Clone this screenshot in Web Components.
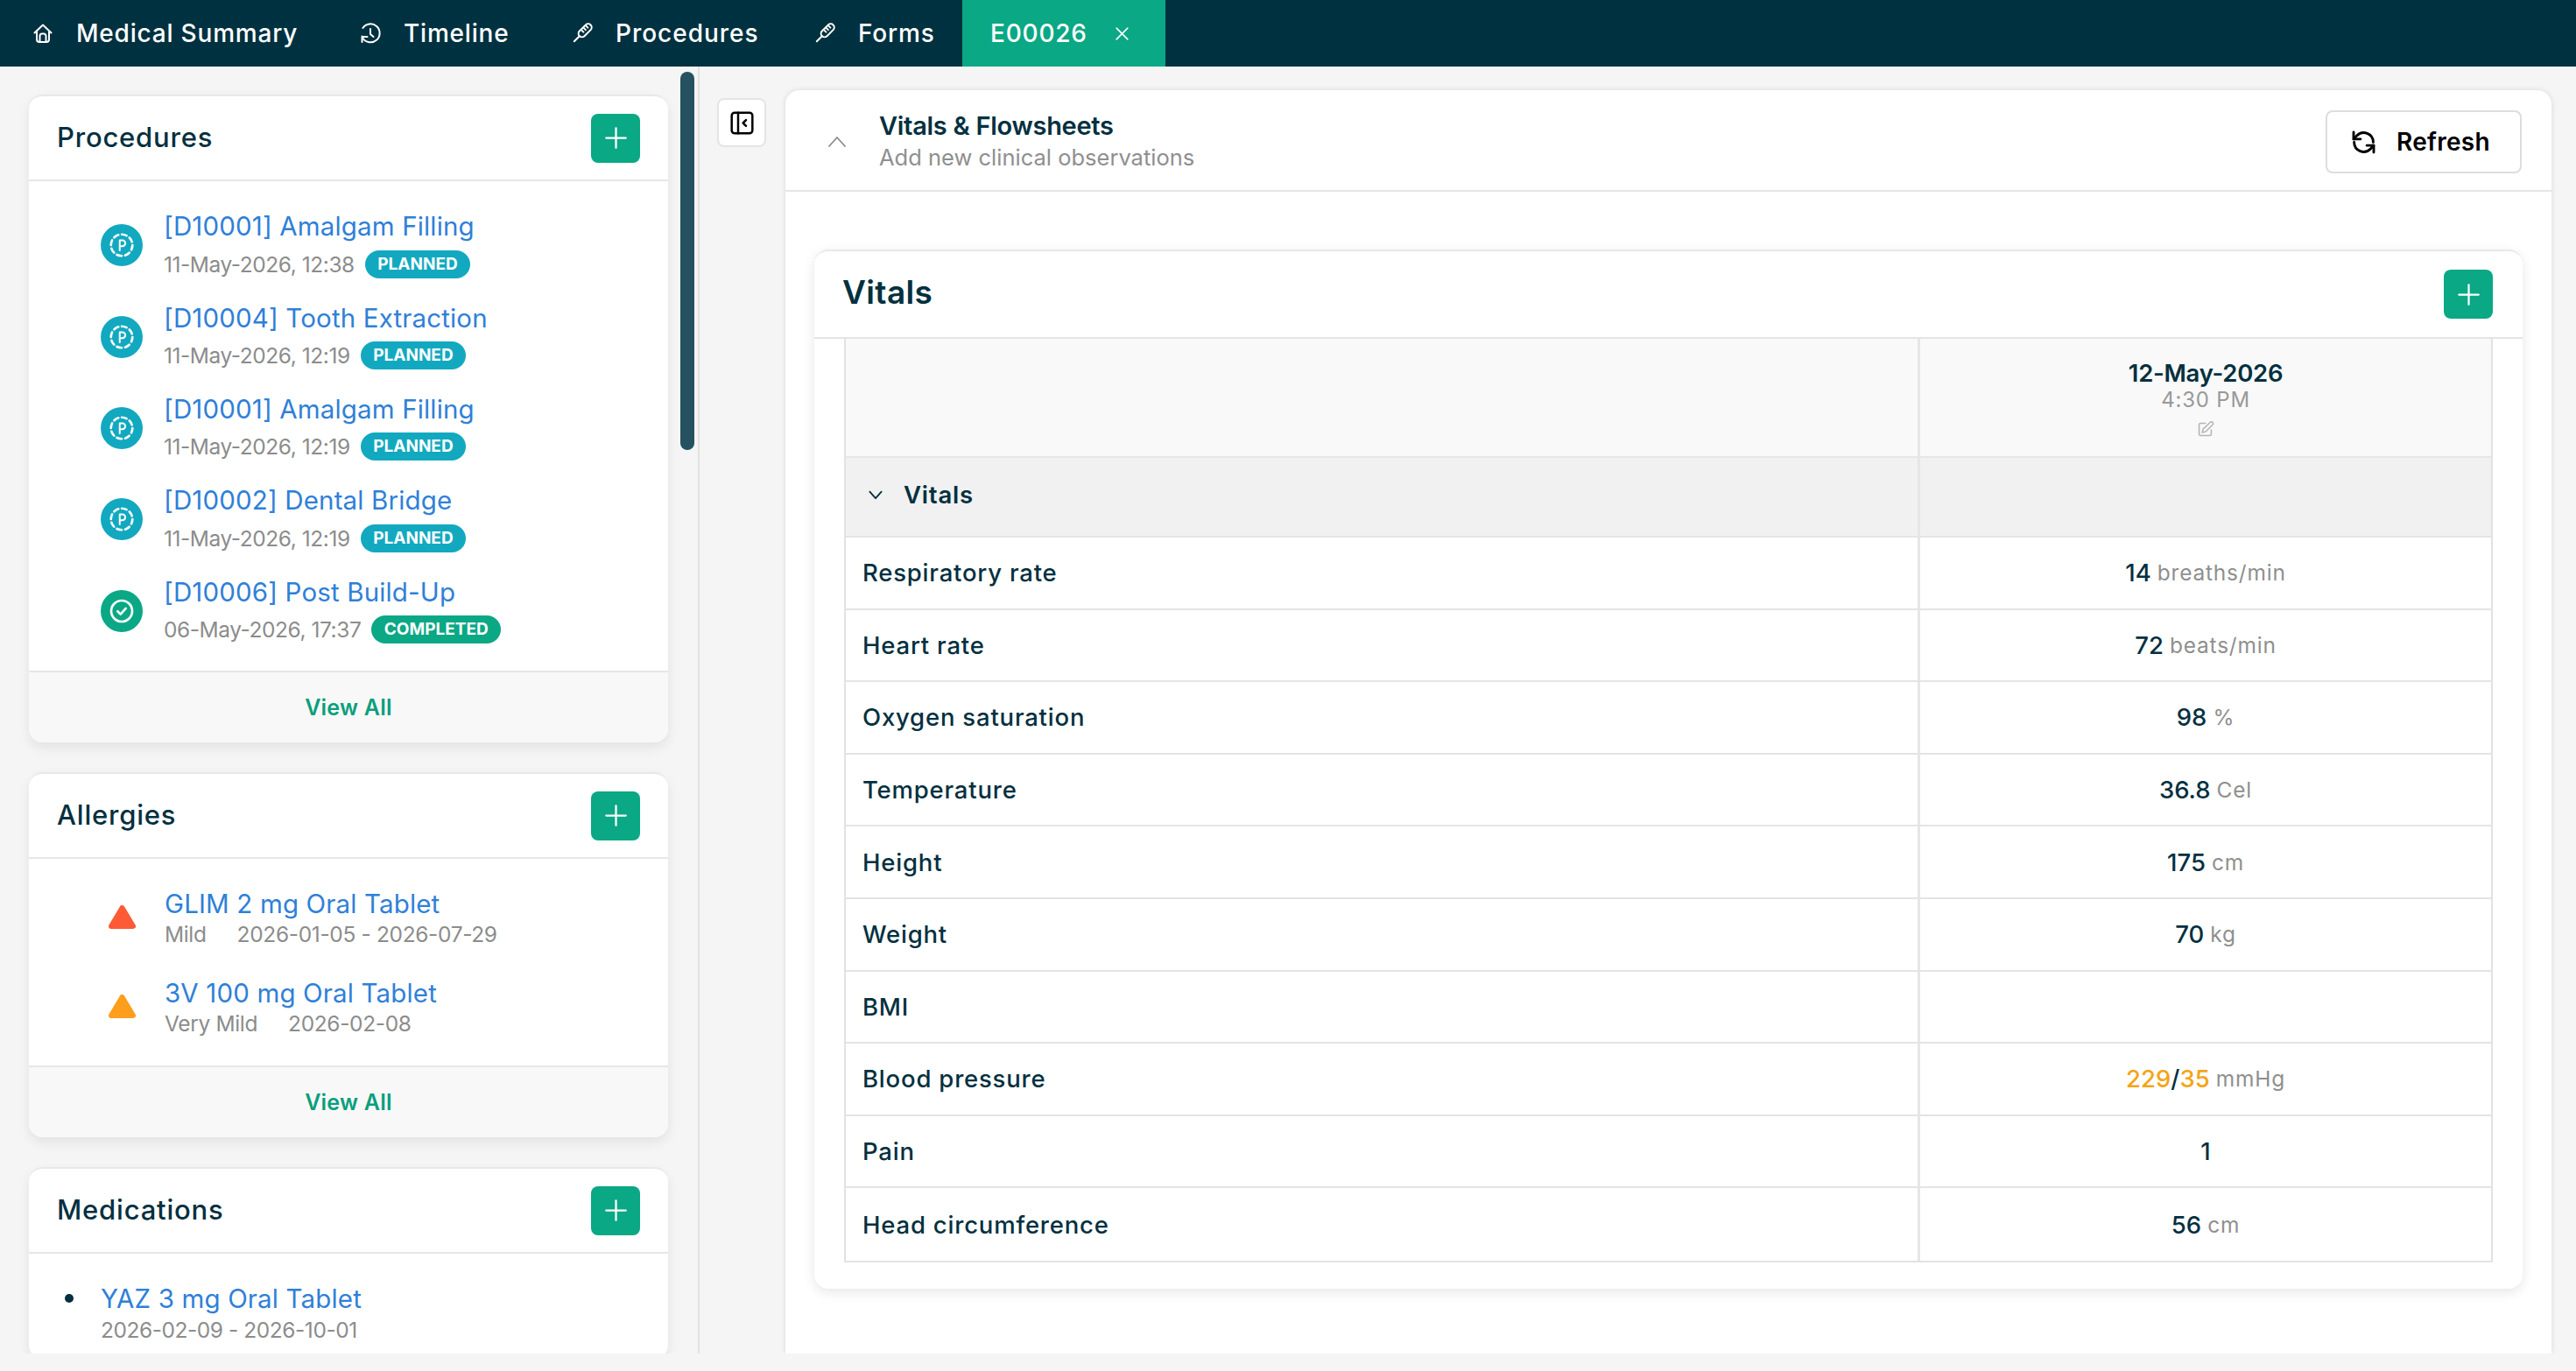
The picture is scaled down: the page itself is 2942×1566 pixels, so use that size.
<!DOCTYPE html>
<html>
<head>
<meta charset="utf-8">
<title>Vitals</title>
<style>
  html, body { margin: 0; height: 100%; background: #f5f5f5; }
  body { font-family: Inter, "Open Sans", sans-serif; color: #04303f; overflow: hidden; letter-spacing: .05em; }
</style>
</head>
<body>
<app-shell>
  <nav-bar slot="nav">
    <nav-tab icon="home" w="374">Medical Summary</nav-tab>
    <nav-tab icon="history" w="242">Timeline</nav-tab>
    <nav-tab icon="thermo" w="277" style="letter-spacing:.035em">Procedures</nav-tab>
    <nav-tab icon="thermo" w="203">Forms</nav-tab>
    <nav-tab w="232" active closable>E00026</nav-tab>
  </nav-bar>

  <side-pane slot="side">
    <side-card heading="Procedures" style="--body-pad:21px 0 0;--card-h:740px" footer>
      <proc-item status="planned" when="11-May-2026, 12:38">[D10001] Amalgam Filling</proc-item>
      <proc-item status="planned" when="11-May-2026, 12:19">[D10004] Tooth Extraction</proc-item>
      <proc-item status="planned" when="11-May-2026, 12:19">[D10001] Amalgam Filling</proc-item>
      <proc-item status="planned" when="11-May-2026, 12:19">[D10002] Dental Bridge</proc-item>
      <proc-item status="completed" when="06-May-2026, 17:37">[D10006] Post Build-Up</proc-item>
    </side-card>
    <side-card heading="Allergies" style="--body-pad:18px 0 0;--card-h:417px" footer>
      <allergy-item color="#ff5a36" severity="Mild" period="2026-01-05 - 2026-07-29">GLIM 2 mg Oral Tablet</allergy-item>
      <allergy-item color="#ff9d1c" severity="Very Mild" period="2026-02-08">3V 100 mg Oral Tablet</allergy-item>
    </side-card>
    <side-card heading="Medications" style="--body-pad:33px 0 15px">
      <med-item period="2026-02-09 - 2026-10-01">YAZ 3 mg Oral Tablet</med-item>
    </side-card>
  </side-pane>

  <vitals-panel slot="main">
    <vitals-card>
      <vitals-row group label="Vitals"></vitals-row>
      <vitals-row label="Respiratory rate" value="14" unit="breaths/min"></vitals-row>
      <vitals-row label="Heart rate" value="72" unit="beats/min"></vitals-row>
      <vitals-row label="Oxygen saturation" value="98" unit="%"></vitals-row>
      <vitals-row label="Temperature" value="36.8" unit="Cel"></vitals-row>
      <vitals-row label="Height" value="175" unit="cm"></vitals-row>
      <vitals-row label="Weight" value="70" unit="kg"></vitals-row>
      <vitals-row label="BMI"></vitals-row>
      <vitals-row label="Blood pressure" unit="mmHg"><b>229</b>/<b>35</b></vitals-row>
      <vitals-row label="Pain" value="1"></vitals-row>
      <vitals-row label="Head circumference" value="56" unit="cm"></vitals-row>
    </vitals-card>
  </vitals-panel>
</app-shell>

<script>
// all the svg icons in one place, drawn on a 24 box
const ICONS = {
  home: '<path d="M2.5 11.5 12 2.5l9.5 9M5 9.5V19a3 3 0 0 0 3 3h8a3 3 0 0 0 3-3V9.5"/><path d="M8.5 22v-7a2.5 2.5 0 0 1 2.5-2.5h2a2.5 2.5 0 0 1 2.5 2.5v7"/>',
  history: '<path d="M3.300 17.500A10.500 10.500 0 1 0 3.400 6"/><path d="M2.500 15.500v6.500M2.500 16h6"/><path d="M12 7v6l3.500 3"/>',
  thermo: '<g transform="rotate(45 12 12)"><rect x="8" y="-1.500" width="8" height="18" rx="4"/><path d="M12 16.500V25M8.500 3h3.500M8.500 6.500h3.500M8.500 10h3.500"/></g>',
  close: '<path d="M4 4l16 16M20 4 4 20"/>',
  plus: '<path d="M12 2v20M2 12h20"/>',
  up: '<path d="M3 17l9-10 9 10"/>',
  down: '<path d="M4 8l8 9 8-9"/>',
  panel: '<rect x="1.500" y="1.500" width="21" height="21" rx="3"/><path d="M8 1.500v21"/><path d="M16 9l-3 3 3 3"/>',
  refresh: '<path d="M21 12a9 9 0 0 0-15.500-6.200L2.500 9"/><path d="M2.500 2.500V9H9"/><path d="M3 12a9 9 0 0 0 15.500 6.200l3-3.200"/><path d="M21.500 21.500V15H15"/>',
  edit: '<path d="M11 4.500H4a2 2 0 0 0-2 2V20a2 2 0 0 0 2 2h13.500a2 2 0 0 0 2-2v-6"/><path d="M18.500 2.500a2.600 2.600 0 0 1 3.500 3.500L11.500 16.500l-5 1.200 1.200-5z"/>',
  check: '<circle cx="12" cy="12" r="9"/><path d="M8.500 12.200l2.500 2.500 4.500-5"/>',
  pending: '<circle cx="12" cy="12" r="9.200" stroke-dasharray="4.200 3"/><path d="M10.300 16.500V7.800h2.200a2.500 2.500 0 0 1 0 5.200h-2.200" stroke-width="1.500"/>'
};

// small helper so each class doesn't repeat attachShadow
class Base extends HTMLElement {
  render(html) {
    if (!this.shadowRoot) this.attachShadow({ mode: 'open' });
    this.shadowRoot.innerHTML = html;
  }
}

class AppIcon extends Base {
  connectedCallback() {
    const sw = this.getAttribute('sw') || 2;
    this.render(`<style>:host{display:inline-flex;flex:none}svg{width:100%;height:100%;display:block;overflow:visible}</style>
      <svg viewBox="0 0 24 24" fill="none" stroke="currentColor" stroke-width="${sw}" stroke-linecap="round" stroke-linejoin="round">${ICONS[this.getAttribute('name')]}</svg>`);
  }
}
customElements.define('app-icon', AppIcon);

class AppShell extends Base {
  constructor() {
    super();
    this.render(`<style>
      :host{display:flex;flex-direction:column;height:1566px}
      .row{display:flex;height:1470px;overflow:hidden}
    </style>
    <slot name="nav"></slot>
    <div class="row"><slot name="side"></slot><slot name="main"></slot></div>`);
  }
}
customElements.define('app-shell', AppShell);

class NavBar extends Base {
  constructor() {
    super();
    this.render(`<style>
      :host{display:flex;height:76px;background:#003140;padding-left:3px;box-shadow:0 2px 12px rgba(0,0,0,.08)}
    </style><slot></slot>`);
  }
}
customElements.define('nav-bar', NavBar);

class NavTab extends Base {
  connectedCallback() {
    const icon = this.getAttribute('icon');
    const active = this.hasAttribute('active');
    this.render(`<style>
      :host{display:flex;align-items:center;height:76px;box-sizing:border-box;width:${this.getAttribute('w')}px;
        padding-left:${active ? 32 : 34}px;color:#fff;font-size:28px;font-weight:500;background:${active ? '#0aa884' : 'none'}}
      app-icon{width:24px;height:24px;margin-right:26px}
      .x{width:19px;height:19px;margin:0 0 0 30px}
    </style>
    ${icon ? `<app-icon name="${icon}"></app-icon>` : ''}<slot></slot>
    ${this.hasAttribute('closable') ? '<app-icon class="x" name="close"></app-icon>' : ''}`);
  }
}
customElements.define('nav-tab', NavTab);

class AddButton extends Base {
  constructor() {
    super();
    this.render(`<style>
      :host{display:flex;align-items:center;justify-content:center;width:56px;height:56px;background:#0aa884;border-radius:8px;color:#fff;flex:none}
      app-icon{width:27px;height:27px}
    </style><app-icon name="plus"></app-icon>`);
  }
}
customElements.define('add-button', AddButton);

class SidePane extends Base {
  constructor() {
    super();
    this.render(`<style>
      :host{display:block;position:relative;box-sizing:border-box;width:799px;flex:none;height:1470px;overflow:hidden;
        padding:32px 0 0 33px;border-right:2px solid #e2e2e2;background:#f5f5f5}
      ::slotted(side-card){margin-bottom:34px}
      .thumb{position:absolute;left:777px;top:6px;width:16px;height:432px;border-radius:8px;background:#265160}
    </style><slot></slot><div class="thumb"></div>`);
  }
}
customElements.define('side-pane', SidePane);

class SideCard extends Base {
  connectedCallback() {
    this.render(`<style>
      :host{display:flex;flex-direction:column;box-sizing:border-box;width:730px;height:var(--card-h,auto);background:#fff;border-radius:16px;
        border-top:2px solid #e8e8e8;box-shadow:0 6px 14px rgba(0,0,0,.08);overflow:hidden}
      header{display:flex;align-items:center;justify-content:space-between;height:95px;padding:0 32px 0 32px;border-bottom:2px solid #e6e6e4;flex:none}
      h2{margin:0;padding-bottom:3px;font-size:31px;font-weight:500;color:#04303f}
      .body{padding:var(--body-pad);flex:1}
      footer{height:80px;flex:none;display:flex;align-items:center;justify-content:center;border-top:2px solid #e6e6e4;background:#f8f8f8;
        color:#0a9f7c;font-size:25px;font-weight:600;letter-spacing:.01em}
    </style>
    <header><h2>${this.getAttribute('heading')}</h2><add-button></add-button></header>
    <div class="body"><slot></slot></div>
    ${this.hasAttribute('footer') ? '<footer>View All</footer>' : ''}`);
  }
}
customElements.define('side-card', SideCard);

class ProcItem extends Base {
  connectedCallback() {
    const done = this.getAttribute('status') === 'completed';
    const tone = done ? '#0aa884' : '#12a9c0';
    this.render(`<style>
      :host{display:flex;align-items:center;height:104.400px;padding-left:82px}
      .ico{width:48px;height:48px;border-radius:50%;background:${tone};color:#fff;display:flex;align-items:center;justify-content:center;margin-right:24px;flex:none}
      app-icon{width:32px;height:32px}
      .name{color:#2f80d8;font-size:29.500px;line-height:43px;letter-spacing:.15px}
      .sub{display:flex;align-items:center;height:43px;color:#8c8c8c;font-size:24.500px;letter-spacing:-.45px}
      .badge{margin-left:12px;height:32px;padding:0 14.500px;border-radius:16px;background:${tone};color:#fff;font-size:19px;font-weight:700;
        line-height:32px;letter-spacing:0}
    </style>
    <span class="ico"><app-icon name="${done ? 'check' : 'pending'}"></app-icon></span>
    <div><div class="name"><slot></slot></div>
    <div class="sub">${this.getAttribute('when')}<span class="badge">${done ? 'COMPLETED' : 'PLANNED'}</span></div></div>`);
  }
}
customElements.define('proc-item', ProcItem);

class AllergyItem extends Base {
  connectedCallback() {
    this.render(`<style>
      :host{display:flex;align-items:center;height:102px;padding-left:91px}
      svg{width:31px;height:27px;margin:0 33px 6px 0;flex:none}
      .name{color:#2f80d8;font-size:29.500px;line-height:35px;letter-spacing:.15px}
      .sub{color:#8c8c8c;font-size:24.500px;line-height:35px;display:flex;gap:35px;letter-spacing:-.35px}
    </style>
    <svg viewBox="0 0 31 27"><path d="M15.500 3 28 24H3z" fill="${this.getAttribute('color')}" stroke="${this.getAttribute('color')}" stroke-width="6" stroke-linejoin="round"/></svg>
    <div><div class="name"><slot></slot></div>
    <div class="sub"><span>${this.getAttribute('severity')}</span><span>${this.getAttribute('period')}</span></div></div>`);
  }
}
customElements.define('allergy-item', AllergyItem);

class MedItem extends Base {
  connectedCallback() {
    this.render(`<style>
      :host{display:flex;padding-left:41px}
      i{width:10px;height:10px;border-radius:50%;background:#04303f;margin:13px 31px 0 0;flex:none}
      .name{color:#2f80d8;font-size:29.500px;line-height:36px;letter-spacing:.15px}
      .sub{color:#8c8c8c;font-size:24.500px;line-height:36px;letter-spacing:-.45px}
    </style><i></i>
    <div><div class="name"><slot></slot></div><div class="sub">${this.getAttribute('period')}</div></div>`);
  }
}
customElements.define('med-item', MedItem);

class VitalsPanel extends Base {
  constructor() {
    super();
    this.render(`<style>
      :host{display:flex;flex:1;align-items:flex-start;padding:0 28px 0 20px;background:#f5f5f5;min-width:0}
      .toggle{width:56px;height:56px;box-sizing:border-box;margin:36px 22px 0 0;background:#fff;border:2px solid #e4e4e4;border-radius:8px;
        display:flex;align-items:center;justify-content:center;color:#000;flex:none}
      .toggle app-icon{width:27px;height:27px}
      .panel{flex:1;margin-top:27px;height:1443px;background:#fff;border-radius:16px 16px 0 0;box-shadow:0 0 6px rgba(0,0,0,.12);box-sizing:border-box}
      .head{display:flex;align-items:center;height:116px;box-sizing:border-box;padding:4px 34px 0 47px;border-bottom:2px solid #e6e6e4}
      .chev{width:24px;height:24px;color:#8c8c8c;margin-right:36px}
      .ttl{flex:1}
      h1{margin:0;font-size:29px;font-weight:600;line-height:36px;letter-spacing:-.01em}
      p{margin:0;font-size:25.500px;line-height:36px;color:#8f8f8f;letter-spacing:0}
      .refresh{display:flex;align-items:center;width:224px;height:72px;box-sizing:border-box;padding-left:27px;border:2px solid #ddd;border-radius:8px;
        color:#000;font-size:28px;font-weight:600;letter-spacing:.01em}
      .refresh app-icon{width:29px;height:29px;margin-right:23px}
      .body{padding:66px 33px 0}
    </style>
    <div class="toggle"><app-icon name="panel" sw="2.200"></app-icon></div>
    <div class="panel">
      <div class="head">
        <app-icon class="chev" name="up" sw="1.800"></app-icon>
        <div class="ttl"><h1>Vitals &amp; Flowsheets</h1><p>Add new clinical observations</p></div>
        <div class="refresh"><app-icon name="refresh" sw="2.400"></app-icon>Refresh</div>
      </div>
      <div class="body"><slot></slot></div>
    </div>`);
  }
}
customElements.define('vitals-panel', VitalsPanel);

class VitalsCard extends Base {
  constructor() {
    super();
    this.render(`<style>
      :host{display:block;box-sizing:border-box;height:1187px;background:#fff;border-radius:16px;border-top:2px solid #e8e8e8;box-shadow:0 4px 14px rgba(0,0,0,.1)}
      header{display:flex;align-items:center;justify-content:space-between;height:98px;padding:0 34px 0 32px;border-bottom:2px solid #e4e4e2}
      h2{margin:0 0 6px;font-size:37px;font-weight:600;letter-spacing:.01em}
      .table{margin:0 34px;border:solid #e2e2e2;border-width:0 2px 2px}
      .top{display:grid;grid-template-columns:1fr 655px;height:136px;background:#f9f9f9;box-sizing:border-box;border-bottom:2px solid #e6e6e6}
      .stamp{border-left:3px solid #e6e6e6;text-align:center;padding-top:21px}
      .date{font-size:27.500px;font-weight:600;line-height:36px;letter-spacing:-.01em}
      .time{font-size:24px;line-height:26px;color:#999}
      app-icon{width:19px;height:19px;color:#b5b5b5;margin-top:10px}
    </style>
    <header><h2>Vitals</h2><add-button></add-button></header>
    <div class="table">
      <div class="top"><div></div><div class="stamp"><div class="date">12-May-2026</div><div class="time">4:30 PM</div><app-icon name="edit"></app-icon></div></div>
      <slot></slot>
    </div>`);
  }
}
customElements.define('vitals-card', VitalsCard);

class VitalsRow extends Base {
  connectedCallback() {
    const group = this.hasAttribute('group');
    const value = this.getAttribute('value') || '';
    const unit = this.getAttribute('unit');
    this.render(`<style>
      :host{display:grid;grid-template-columns:1fr 655px;height:${group ? 91 : 82.600}px;box-sizing:border-box;align-items:stretch;
        border-bottom:2px solid #e4e4e4;background:${group ? '#f1f1f1' : '#fff'};font-size:27.500px}
      :host(:last-child){border-bottom:0}
      .l{display:flex;align-items:center;padding-left:${group ? 24 : 19}px;font-weight:${group ? 600 : 500};padding-bottom:${group ? 5 : 0}px}
      .l app-icon{width:20px;height:20px;margin-right:22px}
      .v{display:flex;align-items:center;justify-content:center;gap:7px;border-left:3px solid #e6e6e6;font-weight:500}
      .val{letter-spacing:0}
      .u{color:#8f8f8f;font-size:24.500px;font-weight:400}
      ::slotted(b){color:#f5a416;font-weight:500}
    </style>
    <div class="l">${group ? '<app-icon name="down" sw="2.200"></app-icon>' : ''}${this.getAttribute('label')}</div>
    <div class="v"><span class="val">${value}<slot></slot></span>${unit ? `<span class="u">${unit}</span>` : ''}</div>`);
  }
}
customElements.define('vitals-row', VitalsRow);
</script>
</body>
</html>
